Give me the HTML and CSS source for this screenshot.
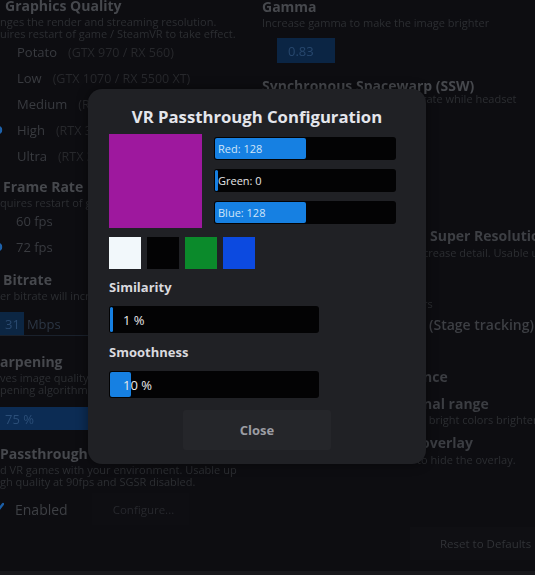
FILE: index.html
```html
<!DOCTYPE html>
<html lang="en">
<head>
<meta charset="utf-8">
<title>Settings</title>
<link rel="stylesheet" href="styles.css">
</head>
<body>
<div class="page">
  <div class="cols">
    <section class="col left">
      <div class="h h-gq">Graphics Quality</div>
      <div class="desc d-first">
        <div class="cl"><span class="cut">Cha</span>nges the render and streaming resolution.</div>
        <div class="cl"><span class="cut">Req</span>uires restart of game / SteamVR to take effect.</div>
      </div>
      <div class="opts">
        <div class="opt"><span class="radio"></span><span class="name">Potato</span><span class="spec">(GTX 970 / RX 560)</span></div>
        <div class="opt"><span class="radio"></span><span class="name">Low</span><span class="spec">(GTX 1070 / RX 5500 XT)</span></div>
        <div class="opt"><span class="radio"></span><span class="name">Medium</span><span class="spec">(RTX 2060 / RX 6600)</span></div>
        <div class="opt"><span class="radio on"></span><span class="name">High</span><span class="spec">(RTX 3070 / RX 6800)</span></div>
        <div class="opt"><span class="radio"></span><span class="name">Ultra</span><span class="spec">(RTX 3080 / RX 6900 XT)</span></div>
      </div>

      <div class="h h-fr">Frame Rate</div>
      <div class="desc d-sec">
        <div class="cl"><span class="cut">Re</span>quires restart of game / SteamVR.</div>
      </div>
      <div class="opts">
        <div class="opt"><span class="radio"></span><span class="name fps">60 fps</span></div>
        <div class="opt"><span class="radio on"></span><span class="name fps">72 fps</span></div>
      </div>

      <div class="h h-br">Bitrate</div>
      <div class="desc d-sec">
        <div class="cl"><span class="cut">High</span>er bitrate will increase latency.</div>
      </div>
      <div class="spin"><span class="val">31</span><span class="unit">Mbps</span></div>

      <div class="h h-sh"><span class="cut">Sh</span>arpening</div>
      <div class="desc d-sec">
        <div class="cl"><span class="cut">Impro</span>ves image quality using</div>
        <div class="cl"><span class="cut">a shar</span>pening algorithm.</div>
      </div>
      <div class="pct"><span>75 %</span></div>

      <div class="h h-pt">Passthrough</div>
      <div class="desc d-sec">
        <div class="cl"><span class="cut">Blen</span>d VR games with your environment. Usable up</div>
        <div class="cl"><span class="cut">to Hi</span>gh quality at 90fps and SGSR disabled.</div>
      </div>
      <div class="enable-row">
        <span class="check"><svg width="14" height="14" viewBox="0 0 14 14"><polyline points="2,7 6,11 13,2" fill="none" stroke="#1b5ea6" stroke-width="2.4" stroke-linecap="round" stroke-linejoin="round"/></svg></span>
        <span class="enabled">Enabled</span>
        <span class="cfg">Configure...</span>
      </div>
    </section>

    <section class="col right">
      <div class="h h-gamma">Gamma</div>
      <div class="desc r-d1">Increase gamma to make the image brighter</div>
      <div class="gbox">0.83</div>
      <div class="h h-ssw">Synchronous Spacewarp (SSW)</div>
      <div class="desc rl rl-ssw"><span class="pre">Reduces GPU load by rendering at half frame</span><span>rate while headset</span></div>

      <div class="h rl rl-sr"><span class="pre">Snapdragon Game</span><span class="sp">Super Resolution</span></div>
      <div class="desc rl rl-srd"><span class="pre">Use SGSR to in</span><span>crease detail. Usable up to High</span></div>
      <div class="desc rl rl-ts"><span class="pre">Choose the tracking space for playe</span><span>rs</span></div>
      <div class="h semi rl rl-st"><span class="pre">Room-scale</span><span class="sp">(Stage tracking)</span></div>
      <div class="h rl rl-ap"><span class="pre">Appeara</span><span>nce</span></div>
      <div class="h rl rl-fr"><span class="pre">Full sig</span><span>nal range</span></div>
      <div class="desc rl rl-frd"><span class="pre">Makes dark colors darker</span><span>, bright colors brighter</span></div>
      <div class="h rl rl-ov"><span class="pre">Hide </span><span>overlay</span></div>
      <div class="desc rl rl-ovd"><span class="pre">Press the button twice t</span><span>o hide the overlay.</span></div>
    </section>
  </div>
  <div class="footer"><span class="reset">Reset to Defaults</span></div>
  <div class="strip"></div>
</div>

<div class="modal">
  <div class="m-title">VR Passthrough Configuration</div>
  <div class="m-top">
    <div class="swatch"></div>
    <div class="chan">
      <div class="bar sm"><div class="fill" style="width:50.2%"></div><span class="lbl on-blue">Red: 128</span></div>
      <div class="bar sm"><div class="fill" style="width:0%"></div><span class="lbl">Green: 0</span></div>
      <div class="bar sm"><div class="fill" style="width:50.2%"></div><span class="lbl on-blue">Blue: 128</span></div>
    </div>
  </div>
  <div class="presets">
    <span class="pre-sw white"></span>
    <span class="pre-sw black"></span>
    <span class="pre-sw green"></span>
    <span class="pre-sw blue"></span>
  </div>
  <div class="m-label">Similarity</div>
  <div class="bar lg"><div class="fill" style="width:1%"></div><span class="lbl big">1 %</span></div>
  <div class="m-label">Smoothness</div>
  <div class="bar lg"><div class="fill" style="width:10%"></div><span class="lbl big">10 %</span></div>
  <div class="m-foot"><span class="close">Close</span></div>
</div>
</body>
</html>
```

FILE: styles.css
```css
* { box-sizing: border-box; }

html, body {
  margin: 0;
  padding: 0;
}

body {
  width: 535px;
  height: 575px;
  overflow: hidden;
  position: relative;
  background: #0d0d11;
  font-family: "Open Sans", "Noto Sans", sans-serif;
}

.page {
  display: flex;
  flex-direction: column;
  height: 575px;
  filter: blur(0.6px);
}

.cols {
  display: grid;
  grid-template-columns: 262px 273px;
  height: 527px;
}

.col {
  display: flex;
  flex-direction: column;
  align-items: flex-start;
  min-width: 0;
}

/* generic text */
.h {
  font-size: 14px;
  font-weight: 700;
  line-height: 18px;
  height: 18px;
  color: #46484d;
  white-space: nowrap;
}

.desc {
  font-size: 11px;
  line-height: 12px;
  color: #2c2e32;
  white-space: nowrap;
}

.cl {
  display: flex;
  height: 12px;
}

.cut {
  width: 0;
  display: flex;
  justify-content: flex-end;
  white-space: nowrap;
}

.h .cut { height: 18px; }

/* left column */
.h-gq { margin-top: -3px; margin-left: 5px; }
.d-first { margin-top: 1px; }
.opts { display: flex; flex-direction: column; margin-top: -1px; }
.opt {
  display: flex;
  align-items: center;
  height: 26px;
  white-space: nowrap;
}
.radio {
  width: 12px;
  height: 12px;
  border-radius: 50%;
  margin-left: -8px;
  flex: none;
}
.radio.on {
  background: radial-gradient(circle, #1d61aa 0 4px, transparent 4.6px);
}
.name {
  margin-left: 13px;
  font-size: 13px;
  color: #393b40;
}
.name.fps { margin-left: 12px; }
.spec {
  margin-left: 11px;
  font-size: 12.5px;
  color: #27282c;
}

.h-fr { margin-top: 9px; margin-left: 3px; }
.d-sec { margin-top: 1px; }
.h-br { margin-top: 11px; margin-left: 3px; }

.spin {
  margin-top: 10px;
  display: flex;
  align-items: center;
  height: 24px;
  width: 130px;
  margin-left: -30px;
  border-bottom: 1px solid #1a212c;
}
.spin .val {
  height: 100%;
  display: flex;
  align-items: center;
  padding: 0 4px 0 35px;
  background: #0c2643;
  color: #2a4a70;
  font-size: 13px;
}
.spin .unit {
  margin-left: 3px;
  font-size: 13px;
  color: #2c3644;
}

.h-sh { margin-top: 17px; display: flex; }

.pct {
  margin-top: 11px;
  height: 23px;
  width: 130px;
  margin-left: -30px;
  padding-left: 35px;
  background: #0c2c54;
  display: flex;
  align-items: center;
  font-size: 13px;
  color: #2b4e78;
}

.h-pt { margin-top: 15px; margin-left: 0; }

.enable-row {
  margin-top: 5px;
  height: 32px;
  display: flex;
  align-items: center;
  white-space: nowrap;
}
.check {
  width: 14px;
  height: 14px;
  margin-left: -10px;
  display: flex;
}
.enabled {
  margin-left: 11px;
  font-size: 14px;
  color: #3e4045;
}
.cfg {
  margin-left: 24px;
  height: 32px;
  width: 97px;
  padding-left: 21px;
  display: flex;
  align-items: center;
  background: #0e0e12;
  font-size: 11.5px;
  color: #27282d;
}

/* right column */
.h-gamma { margin-top: -2px; }
.r-d1 { margin-top: 1px; }
.gbox {
  margin-top: 9px;
  margin-left: 15px;
  width: 58px;
  height: 25px;
  padding-left: 11px;
  display: flex;
  align-items: center;
  background: #0b2544;
  color: #27476d;
  font-size: 13px;
}
.h-ssw { margin-top: 14px; }

.rl { display: flex; }
.rl .pre {
  display: flex;
  justify-content: flex-end;
  white-space: nowrap;
  flex: none;
}
.rl .sp { margin-left: 4px; }

.rl-ssw { margin-top: -2px; }
.rl-ssw .pre { width: 160px; }

.rl-sr { margin-top: 122px; color: #3d3f44; }
.rl-sr .pre { width: 164px; }
.rl-srd { margin-top: 2px; }
.rl-srd .pre { width: 161px; }
.rl-ts { margin-top: 39px; }
.rl-ts .pre { width: 161px; }
.rl-st { margin-top: 6px; color: #3d3f44; }
.semi { font-weight: 600; }
.rl-st .pre { width: 163px; }
.rl-ap { margin-top: 34px; color: #3b3d42; }
.rl-ap .pre { width: 161px; }
.rl-fr { margin-top: 9px; color: #3b3d42; }
.rl-fr .pre { width: 161px; }
.rl-frd { margin-top: 1px; }
.rl-frd .pre { width: 161px; }
.rl-ov { margin-top: 8px; color: #3b3d42; }
.rl-ov .pre { width: 159px; }
.rl-ovd { margin-top: 2px; }
.rl-ovd .pre { width: 159px; }

/* footer */
.footer {
  height: 44px;
  display: flex;
  justify-content: flex-end;
  align-items: flex-start;
}
.reset {
  width: 125px;
  height: 33px;
  padding-left: 30px;
  display: flex;
  align-items: center;
  background: #0f0f13;
  font-size: 11.5px;
  color: #313337;
  white-space: nowrap;
}
.strip {
  height: 4px;
  background: #17171b;
}

/* modal */
.modal {
  position: absolute;
  left: 88px;
  top: 89px;
  width: 338px;
  height: 375px;
  background: #202125;
  border-radius: 14px;
  padding: 17px 21px 0 21px;
  display: flex;
  flex-direction: column;
  align-items: flex-start;
  box-shadow: 0 0 12px rgba(0, 0, 0, 0.45);
}
.m-title {
  align-self: center;
  font-size: 16.7px;
  font-weight: 700;
  line-height: 22px;
  color: #e4e6ec;
  white-space: nowrap;
}
.m-top {
  margin-top: 6px;
  display: flex;
  gap: 12px;
}
.swatch {
  width: 93px;
  height: 94px;
  background: #9e189e;
}
.chan {
  display: flex;
  flex-direction: column;
  gap: 9px;
  padding-top: 3px;
}
.bar {
  position: relative;
  background: #030304;
  border-radius: 3px;
  display: flex;
  align-items: center;
  overflow: hidden;
}
.bar.sm { width: 182px; height: 23px; }
.bar.lg { width: 210px; height: 27px; margin-top: 10px; }
.fill {
  position: absolute;
  left: 1px;
  top: 1px;
  bottom: 1px;
  min-width: 3px;
  background: #1680e2;
  border-radius: 2px;
}
.lbl {
  position: relative;
  padding-left: 4px;
  font-size: 11px;
  color: #e6e6e8;
  white-space: nowrap;
}
.lbl.on-blue { color: #cfe4f8; }
.lbl.big {
  padding-left: 14px;
  font-size: 13px;
  color: #e8e8ea;
}
.presets {
  margin-top: 9px;
  display: flex;
  gap: 6px;
}
.pre-sw { width: 32px; height: 32px; }
.pre-sw.white { background: #f2f8fb; }
.pre-sw.black { background: #030304; }
.pre-sw.green { background: #0b8a2b; }
.pre-sw.blue { background: #0c4ae0; }
.m-label {
  margin-top: 9px;
  font-size: 13px;
  font-weight: 700;
  line-height: 18px;
  color: #dadadf;
}
.bar.lg + .m-label { margin-top: 10px; }
.m-foot {
  align-self: stretch;
  display: flex;
  justify-content: center;
  margin-top: 12px;
}
.close {
  width: 148px;
  height: 40px;
  display: flex;
  align-items: center;
  justify-content: center;
  background: #25262a;
  border-radius: 3px;
  font-size: 13px;
  font-weight: 700;
  color: #9c9da3;
}
```
